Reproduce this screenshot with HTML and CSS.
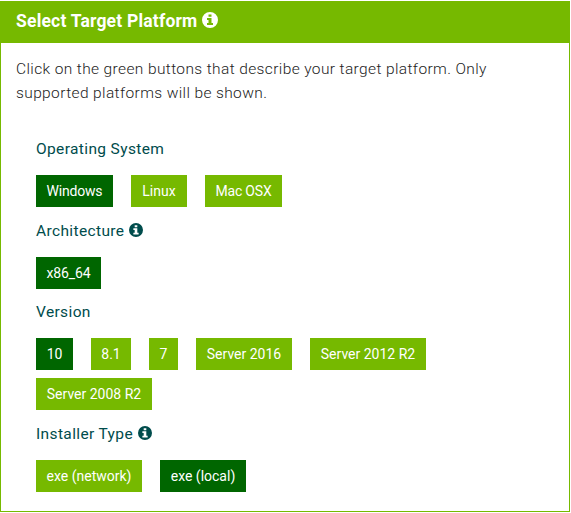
FILE: index.html
```html
<!DOCTYPE html>
<html lang="en">
<head>
<meta charset="utf-8">
<title>Select Target Platform</title>
<link rel="stylesheet" href="styles.css">
</head>
<body>
<section class="panel">
  <h1 class="panel-header"><span class="title">Select Target Platform</span><svg class="info" viewBox="0 0 16 16"><path fill="currentColor" fill-rule="evenodd" d="M8 0a8 8 0 1 0 0 16A8 8 0 0 0 8 0ZM6.5 2.5h3v2.3h-3ZM5 6h4.5v5H11v2H5v-2h1.5V8H5Z"/></svg></h1>
  <div class="panel-body">
    <p class="intro"><span class="line-one">Click on the green buttons that describe your target platform. Only</span> <span class="line-two">supported platforms will be shown.</span></p>
    <div class="group os">
      <h2><span class="label-os">Operating System</span></h2>
      <div class="options">
        <button class="option selected w-windows">Windows</button>
        <button class="option w-linux">Linux</button>
        <button class="option w-mac">Mac OSX</button>
      </div>
    </div>
    <div class="group arch">
      <h2><span class="label-arch">Architecture</span><svg class="info" viewBox="0 0 16 16"><path fill="currentColor" fill-rule="evenodd" d="M8 0a8 8 0 1 0 0 16A8 8 0 0 0 8 0ZM6.5 2.5h3v2.3h-3ZM5 6h4.5v5H11v2H5v-2h1.5V8H5Z"/></svg></h2>
      <div class="options">
        <button class="option selected w-x86">x86_64</button>
      </div>
    </div>
    <div class="group version">
      <h2><span class="label-version">Version</span></h2>
      <div class="options">
        <button class="option selected w-ten">10</button>
        <button class="option w-eight">8.1</button>
        <button class="option w-seven">7</button>
        <button class="option w-2016">Server 2016</button>
        <button class="option w-r2">Server 2012 R2</button>
        <button class="option w-r2">Server 2008 R2</button>
      </div>
    </div>
    <div class="group installer">
      <h2><span class="label-installer">Installer Type</span><svg class="info" viewBox="0 0 16 16"><path fill="currentColor" fill-rule="evenodd" d="M8 0a8 8 0 1 0 0 16A8 8 0 0 0 8 0ZM6.5 2.5h3v2.3h-3ZM5 6h4.5v5H11v2H5v-2h1.5V8H5Z"/></svg></h2>
      <div class="options">
        <button class="option w-network">exe (network)</button>
        <button class="option selected w-local">exe (local)</button>
      </div>
    </div>
  </div>
</section>
</body>
</html>
```
FILE: styles.css
```css
* { box-sizing: border-box; }

body {
  margin: 0;
  padding-top: 1px;
  background: #fff;
  font-family: Roboto, "Liberation Sans", sans-serif;
}

.panel {
  width: 570px;
  height: 511px;
  border: 1px solid #76b900;
}

.panel-header {
  display: flex;
  align-items: center;
  height: 41px;
  margin: 0;
  padding: 0 15px 4px;
  background: #76b900;
  color: #fff;
  font-size: 17.5px;
  font-weight: 700;
  letter-spacing: .2px;
}

.info { flex: none; display: block; width: 14px; height: 14px; margin: 0 0 2px 4px; }
.panel-header .info { width: 16px; height: 16px; margin: 0 0 1px 5px; }

.panel-body { padding: 14px 15px 0; }

.intro {
  margin: 0;
  color: #222;
  font-size: 15.5px;
  font-weight: 300;
  letter-spacing: .38px;
  line-height: 24px;
  white-space: nowrap;
}

.intro span { display: block; }

.group { padding-left: 20px; }
.os { margin-top: 32px; }
.arch, .version, .installer { margin-top: 12px; }

h2 {
  display: flex;
  align-items: center;
  height: 24px;
  margin: 0 0 14px;
  color: #004c4c;
  font-size: 15.5px;
  font-weight: 400;
  letter-spacing: .37px;
}

.version { margin-top: 11px; }

.options { display: flex; flex-wrap: wrap; gap: 8px 18px; }

.option {
  height: 32px;
  padding: 0;
  border: 0;
  background: #76b900;
  color: #fff;
  font: 400 14px/32px Roboto, "Liberation Sans", sans-serif;
  white-space: nowrap;
}

.selected { background: #060; }

.title { width: 181px; white-space: nowrap; }
.label-arch { width: 89px; white-space: nowrap; }
.label-installer { width: 98px; white-space: nowrap; }

.w-windows, .w-mac { width: 77px; letter-spacing: -.2px; }
.w-linux { width: 56px; }
.w-x86 { width: 65px; letter-spacing: -.15px; }
.w-ten { width: 37px; }
.w-eight { width: 40px; }
.w-seven { width: 29px; }
.w-2016 { width: 96px; }
.w-r2 { width: 116px; }
.w-network { width: 106px; }
.w-local { width: 86px; }
```
